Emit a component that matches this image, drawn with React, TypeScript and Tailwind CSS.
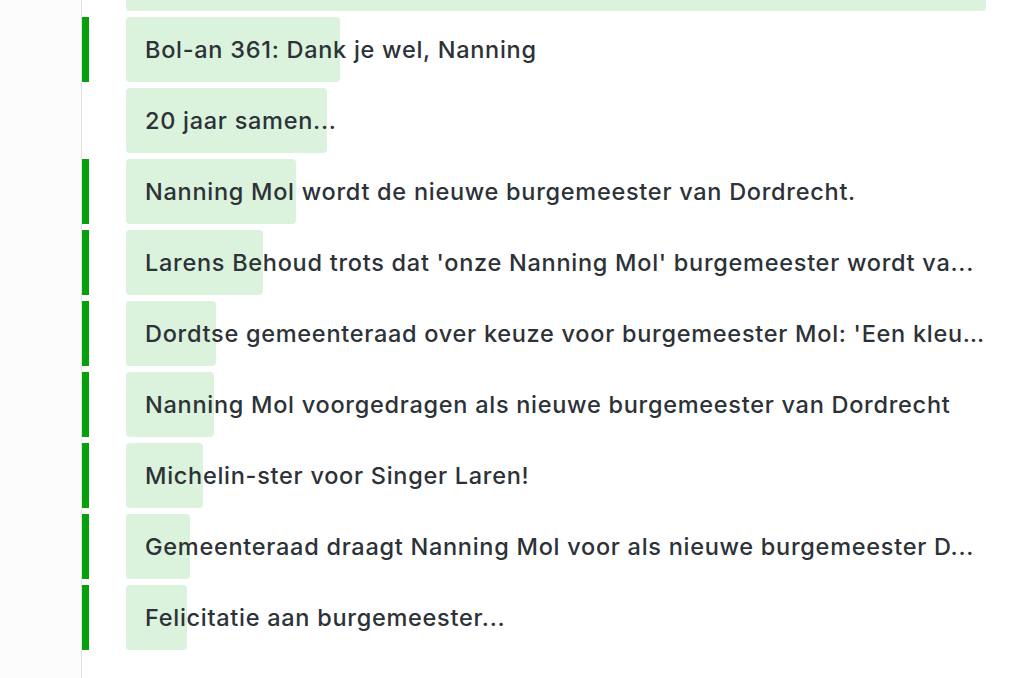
const items = [
    { title: '', width: 860, marked: false },
    { title: 'Bol-an 361: Dank je wel, Nanning', width: 214, marked: true },
    { title: '20 jaar samen...', width: 201, marked: false },
    { title: 'Nanning Mol wordt de nieuwe burgemeester van Dordrecht.', width: 170, marked: true },
    { title: "Larens Behoud trots dat 'onze Nanning Mol' burgemeester wordt va...", width: 137, marked: true },
    { title: "Dordtse gemeenteraad over keuze voor burgemeester Mol: 'Een kleu...", width: 90, marked: true },
    { title: 'Nanning Mol voorgedragen als nieuwe burgemeester van Dordrecht', width: 88, marked: true },
    { title: 'Michelin-ster voor Singer Laren!', width: 77, marked: true },
    { title: 'Gemeenteraad draagt Nanning Mol voor als nieuwe burgemeester D...', width: 64, marked: true },
    { title: 'Felicitatie aan burgemeester...', width: 61, marked: true },
];

const App: React.FC = () => {
    return (
        <div className="flex h-[678px] overflow-hidden bg-white font-['Inter','Liberation_Sans',sans-serif]">
            <div className="w-[82px] shrink-0 border-r border-[#e2e2e2] bg-[#fcfcfc]" />
            <div className="flex-1">
                <div className="-mt-[54px] flex flex-col gap-[6px]">
                    {items.map((item, i) => (
                        <div key={i} className="flex h-[65px] items-stretch">
                            <div
                                className={
                                    item.marked
                                        ? 'w-[7px] shrink-0 bg-[#06a00c]'
                                        : 'w-[7px] shrink-0'
                                }
                            />
                            <div className="relative ml-[37px] flex w-[860px] items-center">
                                <div
                                    className="absolute inset-y-0 left-0 rounded-[4px] bg-[#dbf2dc]"
                                    style={{ width: item.width }}
                                />
                                <span className="relative truncate pl-[19px] text-[23.5px] font-medium tracking-[0.72px] text-[#2c3237]">
                                    {item.title}
                                </span>
                            </div>
                        </div>
                    ))}
                </div>
            </div>
        </div>
    );
};

export default App;
